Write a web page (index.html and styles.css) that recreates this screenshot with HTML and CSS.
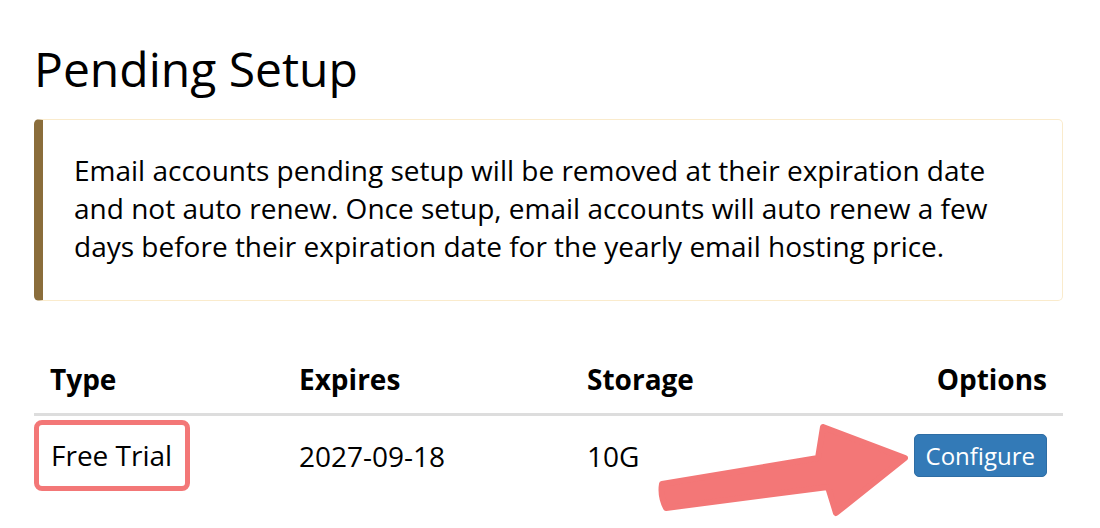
FILE: index.html
```html
<!DOCTYPE html>
<html lang="en">
<head>
    <meta charset="UTF-8">
    <title>Pending Setup</title>
    <link rel="stylesheet" href="styles.css">
</head>
<body>
    <div class="page">
        <h1 class="title">Pending Setup</h1>

        <div class="notice">
            Email accounts pending setup will be removed at their expiration date
            and not auto renew. Once setup, email accounts will auto renew a few
            days before their expiration date for the yearly email hosting price.
        </div>

        <table class="pending">
            <colgroup>
                <col class="col-type">
                <col class="col-expires">
                <col class="col-storage">
                <col>
            </colgroup>
            <thead>
                <tr>
                    <th>Type</th>
                    <th>Expires</th>
                    <th>Storage</th>
                    <th class="right">Options</th>
                </tr>
            </thead>
            <tbody>
                <tr>
                    <td class="type-cell"><span class="mark">Free Trial</span></td>
                    <td>2027-09-18</td>
                    <td>10G</td>
                    <td class="right"><a class="btn-configure" href="#">Configure</a></td>
                </tr>
            </tbody>
        </table>
    </div>

    <!-- annotation arrow -->
    <svg class="arrow" width="1100" height="528" viewBox="0 0 1100 528">
        <path d="M662 484 L818 458 L823 427 L905 458 L836 513 L828 487 L666 508 Q660 496 662 484 Z"
              fill="#f37777" stroke="#f37777" stroke-width="6" stroke-linejoin="round"/>
    </svg>
</body>
</html>
```

FILE: styles.css
```css
* {
    margin: 0;
    padding: 0;
    box-sizing: border-box;
}

body {
    position: relative;
    font-family: 'Open Sans', 'Noto Sans', sans-serif;
    color: #000;
    background-color: #fff;
    width: 1100px;
    height: 528px;
    overflow: hidden;
}

.page {
    padding: 42px 37px 0 34px;
}

.title {
    font-size: 48px;
    font-weight: 400;
    line-height: 53px;
    margin-bottom: 24px;
}

.notice {
    border: 1px solid #faebcc;
    border-left: 9px solid #8a6d3b;
    border-radius: 5px;
    padding: 31px 30px 35px 31px;
    font-size: 28px;
    line-height: 38px;
}

.pending {
    width: 100%;
    margin-top: 48px;
    border-collapse: collapse;
    table-layout: fixed;
    font-size: 28px;
    line-height: 36px;
}

.col-type {
    width: 249px;
}

.col-expires {
    width: 288px;
}

.col-storage {
    width: 250px;
}

.pending th {
    text-align: left;
    font-weight: 700;
    padding: 12px 16px 16px;
    border-bottom: 3px solid #ddd;
}

.pending td {
    padding: 4px 16px 10px;
    vertical-align: middle;
}

.pending .right {
    text-align: right;
}

.pending td.type-cell {
    padding-left: 0;
}

.mark {
    display: inline-block;
    border: 5px solid #f37777;
    border-radius: 8px;
    padding: 12px 13px 13px 12px;
}

.btn-configure {
    display: inline-block;
    background-color: #337ab7;
    border: 1px solid #2e6da4;
    border-radius: 5px;
    color: #fff;
    text-decoration: none;
    font-size: 24px;
    line-height: 31px;
    padding: 5px 11px;
}

.arrow {
    position: absolute;
    left: 0;
    top: 0;
    pointer-events: none;
}
```
